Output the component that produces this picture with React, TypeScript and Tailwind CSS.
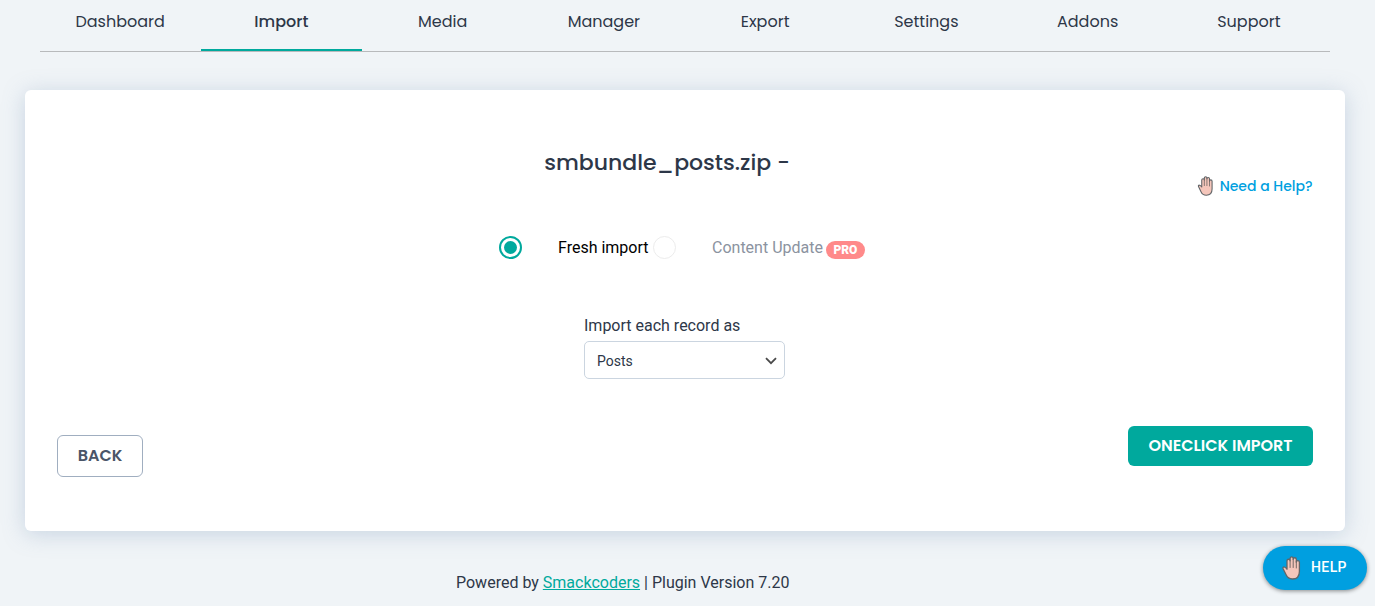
const heading = "font-['Poppins','Inter',sans-serif]";

const tabs = ['Dashboard', 'Import', 'Media', 'Manager', 'Export', 'Settings', 'Addons', 'Support'];

function Hand({ className }: { className: string }) {
  return (
    <svg viewBox="0 0 19 24" className={className} fill="none" aria-hidden="true">
      <path
        d="M5 13.200V4.800a1.550 1.550 0 0 1 3.100 0V2.500a1.550 1.550 0 0 1 3.100 0V3.300a1.550 1.550 0 0 1 3.100 0V6.200a1.550 1.550 0 0 1 3.100 0V15.500c0 4.500-2.600 7.500-7 7.500-3.300 0-5.100-1.500-6.300-4.200L1.100 12.700c-.5-1.200.3-2 1.200-1.700.9.300 2.100 1.200 2.700 2.200Z"
        fill="#f5c6bb"
        stroke="#626568"
        strokeWidth="1.300"
        strokeLinejoin="round"
      />
      <path d="M8.100 4.800V11.500M11.200 3.200V11.500M14.300 5.500V12" stroke="#716865" strokeWidth="1" strokeLinecap="round" />
    </svg>
  );
}

export default function App() {
  return (
    <div className="relative flex h-[606px] w-full flex-col overflow-hidden bg-[#f0f4f7] font-['Roboto',sans-serif] text-base text-[#2d3748]">
      <nav className={`mx-10 mr-[45px] grid h-[52px] shrink-0 grid-cols-8 border-b border-[#b8babc] ${heading}`}>
        {tabs.map((label) => (
          <a
            key={label}
            className={`flex h-[51px] items-center justify-center border-b-2 pb-[6px] text-base ${
              label === 'Import' ? 'mr-px border-[#00a99d] font-medium' : 'border-transparent pr-px'
            }`}
          >
            {label}
          </a>
        ))}
      </nav>

      <main className="mt-[38px] mr-[30px] ml-[25px] flex h-[441px] shrink-0 flex-col rounded-md bg-white px-8 shadow-[0_3px_22px_rgba(120,150,185,0.34)]">
        <h1 className={`mt-[56px] ml-[-36px] text-center text-[22px] leading-[34px] font-medium ${heading}`}>
          smbundle_posts.zip -
        </h1>
        <a className={`mt-[-4px] mr-[0.5px] flex h-5 items-center justify-end text-sm font-medium text-[#009fe0] ${heading}`}>
          <Hand className="mr-[6px] h-5 w-[17px]" />
          <span>Need a Help?</span>
        </a>

        <div className="mt-[39px] ml-[442px] flex h-6 items-center">
          <span className="flex size-[23px] items-center justify-center rounded-full border-2 border-[#00a99d]">
            <span className="size-[13px] rounded-full bg-[#00a99d]" />
          </span>
          <span className="mt-px ml-9 w-[95px] text-black">Fresh import</span>
          <span className="size-[23px] rounded-full border border-[#ececec]" />
          <span className="mt-px ml-9 text-[#8b939f]">Content Update</span>
          <span className="mt-[5px] ml-[3px] flex h-[18px] w-[39px] items-center justify-center rounded-full bg-[#ff8a8a] text-xs font-black text-white">
            PRO
          </span>
        </div>

        <div className="mt-[54px] ml-[527px] w-[201px]">
          <div className="h-[28px] pt-px leading-6">Import each record as</div>
          <div className="flex h-[38px] items-center justify-between rounded-[5px] border border-[#cbd5e0] pr-[7px] pl-3 text-sm">
            <span className="pt-px">Posts</span>
            <svg viewBox="0 0 12 8" className="mt-[2px] h-2 w-3" fill="none" stroke="#4a4a4a" strokeWidth="1.800">
              <path d="M1 1.200l5 5 5-5" />
            </svg>
          </div>
        </div>

        <div className={`mt-[47px] flex items-start justify-between ${heading}`}>
          <button className="mt-[9px] flex h-[42px] w-[86px] items-center justify-center rounded-md border border-[#a0aec0] font-semibold text-[#4a5568]">
            BACK
          </button>
          <button className="flex h-10 w-[185px] items-center justify-center rounded-md bg-[#00a99d] font-semibold whitespace-nowrap text-white">
            ONECLICK IMPORT
          </button>
        </div>
      </main>

      <footer className="mt-[40px] ml-[456px] leading-6">
        Powered by <a className="text-[#00a99d] underline">Smackcoders</a> | Plugin Version 7.20
      </footer>

      <button className="absolute top-[546px] left-[1263px] flex h-[44px] w-[104px] items-center rounded-full bg-[#009fe0] pl-[19px] text-sm font-medium text-white shadow-[0_1px_4px_rgba(0,0,0,0.45)]">
        <Hand className="mr-[10px] h-6 w-[19px]" />
        <span className="pb-[2px] tracking-[0.4px]">HELP</span>
      </button>
    </div>
  );
}
